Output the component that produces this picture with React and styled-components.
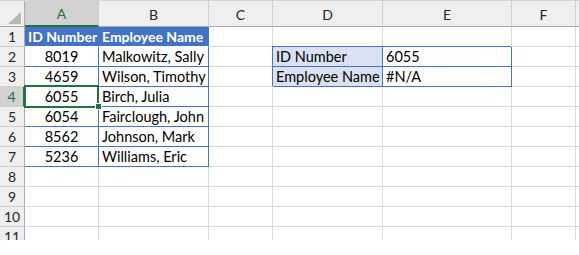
import React from 'react'
import styled, { createGlobalStyle, css } from 'styled-components'

const GlobalStyle = createGlobalStyle`
  html, body {
    margin: 0;
    padding: 0;
    background: #ffffff;
  }
`

const columns = [
    { name: 'A', width: 74 },
    { name: 'B', width: 110 },
    { name: 'C', width: 64 },
    { name: 'D', width: 110 },
    { name: 'E', width: 129 },
    { name: 'F', width: 64 },
]

const BLUE = '#4472c4'
const GREEN = '#217346'
const GRID = '#dadada'

// each row: cells for A..F
const sheet = [
    [{ text: 'ID Number', kind: 'head' }, { text: 'Employee Name', kind: 'head' }, {}, {}, {}, {}],
    [{ text: '8019', kind: 'body', align: 'center' }, { text: 'Malkowitz, Sally', kind: 'body' }, {}, { text: 'ID Number', kind: 'label' }, { text: '6055', kind: 'value' }, {}],
    [{ text: '4659', kind: 'body', align: 'center' }, { text: 'Wilson, Timothy', kind: 'body' }, {}, { text: 'Employee Name', kind: 'label' }, { text: '#N/A', kind: 'value' }, {}],
    [{ text: '6055', kind: 'body', align: 'center', selected: true }, { text: 'Birch, Julia', kind: 'body' }, {}, {}, {}, {}],
    [{ text: '6054', kind: 'body', align: 'center' }, { text: 'Fairclough, John', kind: 'body' }, {}, {}, {}, {}],
    [{ text: '8562', kind: 'body', align: 'center' }, { text: 'Johnson, Mark', kind: 'body' }, {}, {}, {}, {}],
    [{ text: '5236', kind: 'body', align: 'center' }, { text: 'Williams, Eric', kind: 'body' }, {}, {}, {}, {}],
    [{}, {}, {}, {}, {}, {}],
    [{}, {}, {}, {}, {}, {}],
    [{}, {}, {}, {}, {}, {}],
    [{}, {}, {}, {}, {}, {}],
]

const selectedRow = 4
const selectedCol = 'A'

const App = () => {
    return (
        <>
            <GlobalStyle />
            <Sheet>
                <Grid>
                    <Corner>
                        <svg width="14" height="13" viewBox="0 0 14 13">
                            <polygon points="13,0 13,12 0,12" fill="#b7b7b7" />
                        </svg>
                    </Corner>
                    {columns.map((c) => (
                        <ColHeader key={c.name} $active={c.name === selectedCol}>{c.name}</ColHeader>
                    ))}
                    <ColHeader />
                    {sheet.map((row, i) => (
                        <React.Fragment key={i}>
                            <RowHeader $active={i + 1 === selectedRow}>{i + 1}</RowHeader>
                            {row.map((cell, j) => (
                                <Cell key={j} $kind={cell.kind} $align={cell.align} $selected={cell.selected}>
                                    {cell.text}
                                    {cell.selected && <Handle />}
                                </Cell>
                            ))}
                            <Cell />
                        </React.Fragment>
                    ))}
                </Grid>
            </Sheet>
        </>
    )
}

export default App

const Sheet = styled.div`
    width: 579px;
    height: 240px;
    overflow: hidden;
    border-top: 1px solid #d4d4d4;
    box-sizing: border-box;
    background: #ffffff;
`
const Grid = styled.div`
    display: grid;
    grid-template-columns: 25px ${columns.map((c) => `${c.width}px`).join(' ')} 1fr;
    grid-template-rows: 26px repeat(11, 20px);
    font-family: Lato, 'Liberation Sans', sans-serif;
`
const Corner = styled.div`
    background: #efefef;
    border-right: 1px solid #ababab;
    border-bottom: 1px solid #ababab;
    box-sizing: border-box;
    display: flex;
    align-items: flex-end;
    justify-content: flex-end;
    padding: 0 2px 1px 0;
`
const ColHeader = styled.div`
    background: ${(p) => (p.$active ? '#d2d2d2' : '#efefef')};
    color: ${(p) => (p.$active ? GREEN : '#262626')};
    border-right: 1px solid #cfcfcf;
    border-bottom: ${(p) => (p.$active ? `2px solid ${GREEN}` : '1px solid #ababab')};
    box-sizing: border-box;
    font-size: 14px;
    display: flex;
    align-items: center;
    justify-content: center;
    padding-top: 1px;
`
const RowHeader = styled.div`
    background: ${(p) => (p.$active ? '#d2d2d2' : '#efefef')};
    color: ${(p) => (p.$active ? GREEN : '#262626')};
    border-right: ${(p) => (p.$active ? `2px solid ${GREEN}` : '1px solid #ababab')};
    border-bottom: 1px solid #cfcfcf;
    box-sizing: border-box;
    font-size: 14px;
    display: flex;
    align-items: center;
    justify-content: center;
`
const Cell = styled.div`
    position: relative;
    box-sizing: border-box;
    border-right: 1px solid ${GRID};
    border-bottom: 1px solid ${GRID};
    font-size: 14.5px;
    color: #000000;
    line-height: 19px;
    padding: 0 3px;
    white-space: nowrap;
    text-align: ${(p) => p.$align || 'left'};
    ${(p) => p.$kind === 'head' && css`
        background: ${BLUE};
        color: #ffffff;
        font-weight: 700;
        font-size: 14px;
        border-right-color: ${BLUE};
        border-bottom-color: #ffffff;
    `}
    ${(p) => p.$kind === 'body' && css`
        border-right-color: ${BLUE};
        border-bottom-color: ${BLUE};
    `}
    ${(p) => (p.$kind === 'label' || p.$kind === 'value') && css`
        background: ${p.$kind === 'label' ? '#d9e1f2' : '#ffffff'};
        border-right-color: ${BLUE};
        border-bottom-color: ${BLUE};
        box-shadow: -1px -1px 0 ${BLUE};
    `}
    ${(p) => p.$selected && css`
        z-index: 2;
        &::after {
            content: '';
            position: absolute;
            left: -1px;
            top: -2px;
            right: -1px;
            bottom: -2px;
            border: 2px solid ${GREEN};
            pointer-events: none;
        }
    `}
`
const Handle = styled.span`
    position: absolute;
    right: -4px;
    bottom: -4px;
    width: 5px;
    height: 5px;
    background: ${GREEN};
    border: 1px solid #ffffff;
    z-index: 3;
`
